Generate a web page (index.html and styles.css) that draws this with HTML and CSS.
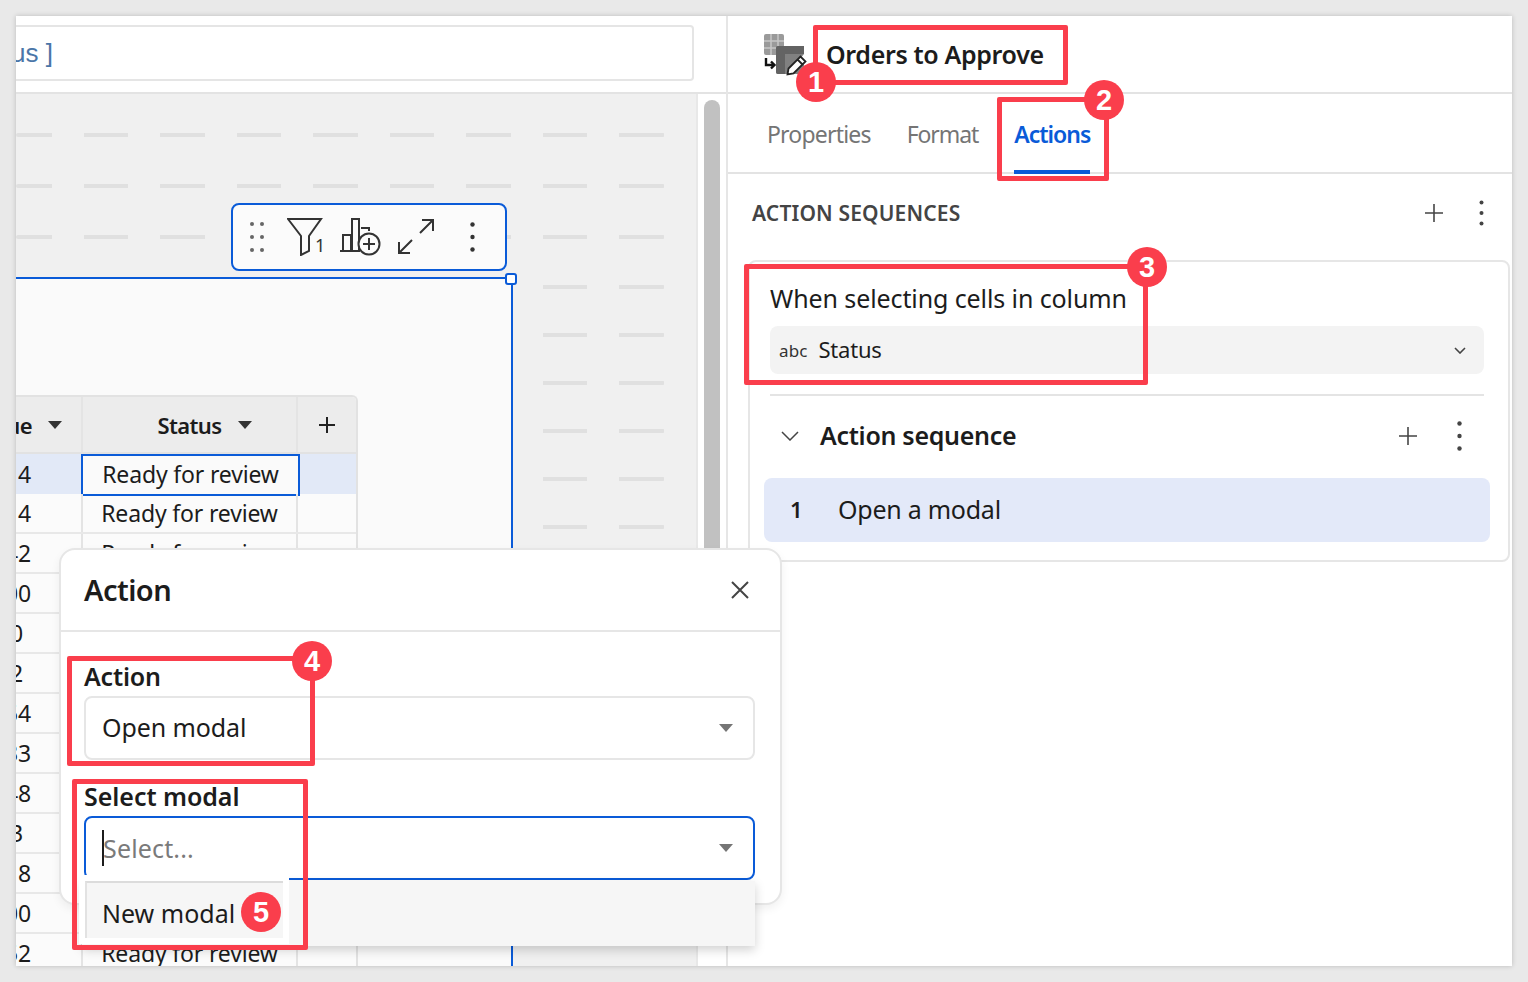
FILE: index.html
```html
<!DOCTYPE html>
<html lang="en">
<head>
    <meta charset="UTF-8">
    <meta name="viewport" content="width=device-width, initial-scale=1.0">
    <title>Orders to Approve - Actions</title>
    <link rel="stylesheet" href="styles.css">
</head>
<body>
    <div class="app">
        <!-- Left side: formula bar and workbook canvas -->
        <div class="workbook">
            <div class="formula-bar">
                <div class="formula-input"><span class="formula-text">us ]</span></div>
            </div>
            <div class="canvas-wrap">
                <div class="canvas">
                    <div class="dashes">
                        <div class="dash-row"></div><div class="dash-row"></div><div class="dash-row"></div>
                        <div class="dash-row"></div><div class="dash-row"></div><div class="dash-row"></div>
                        <div class="dash-row"></div><div class="dash-row"></div><div class="dash-row"></div>
                        <div class="dash-row"></div><div class="dash-row"></div><div class="dash-row"></div>
                        <div class="dash-row"></div><div class="dash-row"></div>
                    </div>

                    <div class="widget">
                        <div class="corner-handle"></div>
                        <div class="data-table">
                            <div class="table-row table-head">
                                <div class="cell cell-num">ue<svg class="sort-caret" viewBox="0 0 14 8"><path d="M0 0h14L7 8z"/></svg></div>
                                <div class="cell cell-status">Status<svg class="sort-caret" viewBox="0 0 14 8"><path d="M0 0h14L7 8z"/></svg></div>
                                <div class="cell cell-add"><svg class="icon-plus" viewBox="0 0 16 16"><path d="M8 0v16M0 8h16"/></svg></div>
                            </div>
                            <div class="table-row row-selected">
                                <div class="cell cell-num">14</div>
                                <div class="cell cell-status cell-active">Ready for review</div>
                                <div class="cell cell-add"></div>
                            </div>
                            <div class="table-row"><div class="cell cell-num">14</div><div class="cell cell-status">Ready for review</div><div class="cell cell-add"></div></div>
                            <div class="table-row"><div class="cell cell-num">42</div><div class="cell cell-status">Ready for review</div><div class="cell cell-add"></div></div>
                            <div class="table-row"><div class="cell cell-num">300</div><div class="cell cell-status">Ready for review</div><div class="cell cell-add"></div></div>
                            <div class="table-row"><div class="cell cell-num cell-short">10</div><div class="cell cell-status">Ready for review</div><div class="cell cell-add"></div></div>
                            <div class="table-row"><div class="cell cell-num cell-short">12</div><div class="cell cell-status">Ready for review</div><div class="cell cell-add"></div></div>
                            <div class="table-row"><div class="cell cell-num">54</div><div class="cell cell-status">Ready for review</div><div class="cell cell-add"></div></div>
                            <div class="table-row"><div class="cell cell-num">33</div><div class="cell cell-status">Ready for review</div><div class="cell cell-add"></div></div>
                            <div class="table-row"><div class="cell cell-num">48</div><div class="cell cell-status">Ready for review</div><div class="cell cell-add"></div></div>
                            <div class="table-row"><div class="cell cell-num cell-short">13</div><div class="cell cell-status">Ready for review</div><div class="cell cell-add"></div></div>
                            <div class="table-row"><div class="cell cell-num">18</div><div class="cell cell-status">Ready for review</div><div class="cell cell-add"></div></div>
                            <div class="table-row"><div class="cell cell-num">300</div><div class="cell cell-status">Ready for review</div><div class="cell cell-add"></div></div>
                            <div class="table-row"><div class="cell cell-num">52</div><div class="cell cell-status">Ready for review</div><div class="cell cell-add"></div></div>
                        </div>
                    </div>

                    <div class="float-toolbar">
                        <svg class="tb-drag" viewBox="0 0 14 30"><g fill="#666"><circle cx="2" cy="2" r="2"/><circle cx="12" cy="2" r="2"/><circle cx="2" cy="15" r="2"/><circle cx="12" cy="15" r="2"/><circle cx="2" cy="28" r="2"/><circle cx="12" cy="28" r="2"/></g></svg>
                        <div class="tb-filter">
                            <svg viewBox="0 0 36 38"><path d="M1 1h33L22 18v15l-8 4V18z" fill="none" stroke="#333" stroke-width="2"/></svg>
                            <span class="tb-count">1</span>
                        </div>
                        <svg class="tb-chart" viewBox="0 0 42 38"><g fill="none" stroke="#333" stroke-width="2"><path d="M0 33h20M3 33V17h8v16M12 33V1h7v32M22 11V10h7v3"/><circle cx="29" cy="26" r="10.5" fill="#fbfbfb"/><path d="M29 20v12M23 26h12"/></g></svg>
                        <svg class="tb-expand" viewBox="0 0 38 36"><g fill="none" stroke="#333" stroke-width="2"><path d="M23 14L36 1M25 1h11v11M15 21L2 34M2 23v11h11"/></g></svg>
                        <svg class="tb-kebab" viewBox="0 0 5 30"><g fill="#333"><circle cx="2.5" cy="2.5" r="2.2"/><circle cx="2.5" cy="15" r="2.2"/><circle cx="2.5" cy="27.5" r="2.2"/></g></svg>
                    </div>
                </div>
                <div class="scroll-gutter"><div class="scroll-thumb"></div></div>
            </div>
        </div>

        <!-- Right side: properties panel -->
        <div class="panel">
            <div class="panel-head">
                <svg class="element-icon" viewBox="0 0 42 42">
                    <rect x="0" y="0" width="20" height="21" rx="2" fill="#9a9a9a"/>
                    <path d="M0 7h20M0 14h20M7 0v21M14 0v21" stroke="#c6c6c6" stroke-width="1.5"/>
                    <rect x="12" y="12" width="28" height="28" rx="2" fill="#808080"/>
                    <path d="M12 20h28v-8H14a2 2 0 0 0-2 2zM12 20h9v20h-7a2 2 0 0 1-2-2z" fill="#636363"/>
                    <path d="M22 42L40 20l4 4-18 18z" fill="#fff"/>
                    <path d="M2 24v7h8M7 27.500l3.500 3.500L7 34.500" fill="none" stroke="#111" stroke-width="2.400"/>
                    <path d="M23.500 40.500l1-6 12-12 5 5-12 12zM33.500 25.500l5 5" fill="#fff" stroke="#222" stroke-width="1.800"/>
                </svg>
                <h1 class="panel-title">Orders to Approve</h1>
            </div>
            <div class="tabs">
                <div class="tab">Properties</div>
                <div class="tab tab-format">Format</div>
                <div class="tab tab-active">Actions</div>
            </div>
            <div class="section-head">
                <span class="section-title">ACTION SEQUENCES</span>
                <svg class="icon-plus icon-thin" viewBox="0 0 16 16"><path d="M8 0v16M0 8h16"/></svg>
                <svg class="icon-kebab" viewBox="0 0 5 26"><g fill="#444"><circle cx="2.5" cy="2.5" r="2"/><circle cx="2.5" cy="13" r="2"/><circle cx="2.5" cy="23.500" r="2"/></g></svg>
            </div>
            <div class="seq-card">
                <div class="seq-label">When selecting cells in column</div>
                <div class="column-select">
                    <span class="type-tag">abc</span>
                    <span class="column-name">Status</span>
                    <svg class="chevron" viewBox="0 0 12 7"><path d="M1 1l5 5 5-5"/></svg>
                </div>
                <div class="seq-rule"></div>
                <div class="seq-head">
                    <svg class="chevron chevron-lg" viewBox="0 0 18 10"><path d="M1 1l8 8 8-8"/></svg>
                    <span class="seq-name">Action sequence</span>
                    <svg class="icon-plus icon-thin" viewBox="0 0 16 16"><path d="M8 0v16M0 8h16"/></svg>
                    <svg class="icon-kebab" viewBox="0 0 5 30"><g fill="#444"><circle cx="2.5" cy="2.500" r="2.200"/><circle cx="2.5" cy="15" r="2.200"/><circle cx="2.5" cy="27.500" r="2.200"/></g></svg>
                </div>
                <div class="seq-item">
                    <span class="seq-num">1</span>
                    <span class="seq-text">Open a modal</span>
                </div>
            </div>
        </div>

        <!-- Action modal -->
        <div class="modal">
            <div class="modal-head">
                <h2 class="modal-title">Action</h2>
                <svg class="modal-close" viewBox="0 0 18 18"><path d="M1 1l16 16M17 1L1 17"/></svg>
            </div>
            <div class="modal-body">
                <div class="field-label">Action</div>
                <div class="select">
                    <span class="select-value">Open modal</span>
                    <svg class="select-caret" viewBox="0 0 14 8"><path d="M0 0h14L7 8z"/></svg>
                </div>
                <div class="field-label field-label-2">Select modal</div>
                <div class="select select-focus">
                    <span class="caret-bar"></span>
                    <span class="select-placeholder">Select...</span>
                    <svg class="select-caret" viewBox="0 0 14 8"><path d="M0 0h14L7 8z"/></svg>
                </div>
            </div>
        </div>
        <div class="dropdown">
            <div class="option"><span class="option-text">New modal</span></div>
        </div>

        <!-- Red callouts -->
        <div class="callout callout-1"></div>
        <div class="callout callout-2"></div>
        <div class="callout callout-3"></div>
        <div class="callout callout-4"></div>
        <div class="callout callout-5"></div>
        <div class="badge badge-1">1</div>
        <div class="badge badge-2">2</div>
        <div class="badge badge-3">3</div>
        <div class="badge badge-4">4</div>
        <div class="badge badge-5">5</div>
    </div>
</body>
</html>
```

FILE: styles.css
```css
/* Page frame */
* {
    box-sizing: border-box;
}

html, body {
    height: 100%;
}

body {
    margin: 0;
    padding: 16px;
    background-color: #e9e9e9;
    font-family: "Noto Sans", Arial, sans-serif;
    color: #1c1c1c;
    overflow: hidden;
}

.app {
    position: relative;
    display: flex;
    width: 1496px;
    height: 950px;
    background-color: #ffffff;
    overflow: hidden;
    box-shadow: 0 0 5px rgba(0, 0, 0, 0.2);
}

/* Left side */
.workbook {
    display: flex;
    flex-direction: column;
    width: 712px;
    flex-shrink: 0;
    border-right: 2px solid #e6e6e6;
}

.formula-bar {
    height: 78px;
    padding-top: 9px;
    border-bottom: 2px solid #e3e3e3;
    flex-shrink: 0;
}

.formula-input {
    display: flex;
    align-items: center;
    width: 678px;
    height: 56px;
    border: 2px solid #e5e5e5;
    border-left: 0;
    border-radius: 0 4px 4px 0;
    overflow: hidden;
}

.formula-text {
    margin-left: -5px;
    font-family: "Liberation Sans", Arial, sans-serif;
    font-size: 26px;
    color: #4a76a8;
}

.canvas-wrap {
    display: flex;
    flex: 1;
    min-height: 0;
}

.canvas {
    position: relative;
    width: 682px;
    flex-shrink: 0;
    background-color: #f0f0f0;
    border-right: 2px solid #e8e8e8;
    overflow: hidden;
}

.dashes {
    display: flex;
    flex-direction: column;
    width: 649px;
    padding-top: 39px;
}

.dash-row {
    height: 4px;
    margin-bottom: 44px;
    flex-shrink: 0;
    border-radius: 2px;
    background-image: repeating-linear-gradient(90deg,
        #e0e0e0 0, #e0e0e0 36px,
        transparent 36px, transparent 68px,
        #e0e0e0 68px, #e0e0e0 76.5px);
}

.dash-row:nth-child(-n+3) {
    margin-bottom: 47px;
}

.dash-row:nth-child(3) {
    margin-bottom: 46px;
}

.scroll-gutter {
    flex: 1;
    padding: 6px 0 0 6px;
}

.scroll-thumb {
    width: 16px;
    height: 800px;
    background-color: #c1c1c1;
    border-radius: 8px 8px 0 0;
}

/* Selected element on the canvas */
.widget {
    position: absolute;
    left: 0;
    top: 183px;
    width: 497px;
    height: 720px;
    background-color: #fafafa;
    border-top: 2px solid #0a5bd8;
    border-right: 2px solid #0a5bd8;
    padding-top: 116px;
}

.corner-handle {
    position: absolute;
    right: -6px;
    top: -6px;
    width: 12px;
    height: 12px;
    background-color: #ffffff;
    border: 2px solid #0a5bd8;
    border-radius: 3px;
}

.data-table {
    width: 342px;
    border-top: 2px solid #e2e2e2;
    border-right: 2px solid #e2e2e2;
    border-top-right-radius: 6px;
    overflow: hidden;
}

.table-row {
    display: flex;
    height: 40px;
    background-color: #fbfbfb;
    border-bottom: 2px solid #e8e8e8;
}

.table-head {
    height: 57px;
    background-color: #ececec;
    font-weight: 600;
    border-bottom: 2px solid #e2e2e2;
}

.row-selected {
    background-color: #e2e9f7;
    border-bottom: 0;
}

.cell {
    display: flex;
    align-items: center;
    font-size: 23px;
    letter-spacing: -0.16px;
    white-space: nowrap;
}

.cell-num {
    justify-content: flex-end;
    width: 67px;
    padding-right: 50px;
    border-right: 2px solid #e4e4e4;
    flex-shrink: 0;
}

.cell-short {
    padding-right: 58px;
}

.table-head .cell-num {
    padding-right: 19px;
    font-size: 22px;
    letter-spacing: -0.6px;
}

.cell-status {
    justify-content: center;
    width: 215px;
    border-right: 2px solid #e4e4e4;
    flex-shrink: 0;
}

.table-head .cell-status {
    padding-left: 30px;
    font-size: 22px;
    letter-spacing: -0.6px;
}

.cell-active {
    width: 219px;
    height: 42px;
    margin-left: -2px;
    margin-right: -2px;
    padding-bottom: 3px;
    background-color: #fafafa;
    border: 2px solid #0a5bd8;
}

.cell-add {
    flex: 1;
    justify-content: center;
}

.sort-caret {
    width: 14px;
    height: 8px;
    margin-left: 16px;
    fill: #333333;
    flex-shrink: 0;
}

.icon-plus {
    width: 16px;
    height: 16px;
    fill: none;
    stroke: #222222;
    stroke-width: 2;
}

.icon-thin {
    width: 18px;
    height: 18px;
    stroke: #444444;
    stroke-width: 1.4;
    flex-shrink: 0;
}

/* Floating toolbar */
.float-toolbar {
    position: absolute;
    left: 215px;
    top: 109px;
    display: flex;
    align-items: center;
    width: 276px;
    height: 68px;
    background-color: #fbfbfb;
    border: 2px solid #0a5bd8;
    border-radius: 8px;
}

.tb-drag {
    width: 14px;
    height: 30px;
    margin-left: 17px;
}

.tb-filter {
    position: relative;
    width: 36px;
    height: 38px;
    margin-left: 23px;
}

.tb-filter svg {
    display: block;
    width: 36px;
    height: 38px;
}

.tb-count {
    position: absolute;
    left: 28px;
    top: 15px;
    font-size: 18px;
    line-height: 24px;
    color: #333333;
}

.tb-chart {
    width: 42px;
    height: 38px;
    margin-left: 17px;
}

.tb-expand {
    width: 38px;
    height: 36px;
    margin-left: 15px;
}

.tb-kebab {
    width: 5px;
    height: 30px;
    margin-left: 35px;
}

/* Right panel */
.panel {
    flex: 1;
    display: flex;
    flex-direction: column;
    min-width: 0;
}

.panel-head {
    display: flex;
    align-items: center;
    height: 78px;
    padding: 0 0 0 36px;
    border-bottom: 2px solid #e3e3e3;
    flex-shrink: 0;
}

.element-icon {
    width: 42px;
    height: 42px;
    margin-top: 2px;
    overflow: visible;
}

.panel-title {
    margin: 0 0 0 20px;
    font-size: 25px;
    font-weight: 600;
    letter-spacing: -0.35px;
    color: #1c1c1c;
}

.tabs {
    display: flex;
    height: 80px;
    padding-left: 39px;
    gap: 36px;
    border-bottom: 2px solid #e3e3e3;
    flex-shrink: 0;
}

.tab {
    display: flex;
    align-items: center;
    height: 80px;
    padding-top: 4px;
    font-size: 23px;
    letter-spacing: -0.8px;
    color: #757575;
    border-bottom: 4px solid transparent;
    border-radius: 4px 4px 0 0;
}

.tab-format {
    letter-spacing: -1.1px;
}

.tab-active {
    font-weight: 600;
    letter-spacing: -1px;
    color: #0a5bd8;
    border-bottom-color: #0a5bd8;
}

.section-head {
    display: flex;
    align-items: center;
    height: 78px;
    padding: 0 28px 0 24px;
    flex-shrink: 0;
}

.section-title {
    flex: 1;
    font-size: 21px;
    font-weight: 600;
    letter-spacing: 0.15px;
    color: #444444;
}

.icon-kebab {
    width: 5px;
    height: 26px;
    margin-left: 36px;
    flex-shrink: 0;
}

.seq-card {
    margin: 8px 2px 0 20px;
    height: 302px;
    padding: 0 24px 0 20px;
    border: 2px solid #e6e6e6;
    border-radius: 8px;
    flex-shrink: 0;
}

.seq-label {
    margin-top: 18px;
    height: 46px;
    font-size: 25px;
    line-height: 36px;
    letter-spacing: -0.1px;
}

.column-select {
    display: flex;
    align-items: center;
    height: 48px;
    padding: 0 18px 0 9px;
    background-color: #f3f3f3;
    border-radius: 8px;
}

.type-tag {
    font-size: 17px;
    letter-spacing: 0.1px;
    color: #333333;
}

.column-name {
    flex: 1;
    margin-left: 11px;
    padding-bottom: 2px;
    font-size: 22px;
    letter-spacing: -0.2px;
}

.chevron {
    width: 12px;
    height: 7px;
    fill: none;
    stroke: #444444;
    stroke-width: 1.6;
    flex-shrink: 0;
}

.seq-rule {
    height: 2px;
    margin-top: 20px;
    background-color: #e4e4e4;
}

.seq-head {
    display: flex;
    align-items: center;
    height: 82px;
    padding: 0 22px 2px 11px;
}

.chevron-lg {
    width: 18px;
    height: 10px;
    stroke-width: 1.5;
}

.seq-name {
    flex: 1;
    margin-left: 21px;
    padding-bottom: 2px;
    font-size: 25px;
    font-weight: 600;
    letter-spacing: -0.3px;
}

.seq-head .icon-kebab {
    height: 30px;
    margin-left: 40px;
}

.seq-item {
    display: flex;
    align-items: center;
    height: 64px;
    margin: 0 -6px;
    padding: 0 0 2px 26px;
    background-color: #e3e9f9;
    border-radius: 8px;
}

.seq-num {
    width: 48px;
    font-size: 22px;
    font-weight: 600;
}

.seq-text {
    font-size: 25px;
    letter-spacing: -0.25px;
}

/* Action modal */
.modal {
    position: absolute;
    left: 43px;
    top: 532px;
    width: 723px;
    height: 357px;
    background-color: #ffffff;
    border: 2px solid #e6e6e6;
    border-radius: 16px;
    box-shadow: 0 4px 10px rgba(0, 0, 0, 0.06);
}

.modal-head {
    display: flex;
    align-items: center;
    justify-content: space-between;
    height: 82px;
    padding: 0 31px 0 23px;
    border-bottom: 2px solid #e6e6e6;
}

.modal-title {
    margin: 0;
    padding-bottom: 2px;
    font-size: 29px;
    font-weight: 600;
    letter-spacing: -0.55px;
}

.modal-close {
    width: 18px;
    height: 18px;
    fill: none;
    stroke: #444444;
    stroke-width: 2;
}

.modal-body {
    padding: 28px 25px 0 23px;
}

.field-label {
    height: 36px;
    font-size: 25px;
    line-height: 32px;
    font-weight: 600;
    letter-spacing: -0.2px;
}

.field-label-2 {
    margin-top: 20px;
    letter-spacing: -0.05px;
}

.select {
    display: flex;
    align-items: center;
    position: relative;
    height: 64px;
    padding: 0 20px 0 16px;
    border: 2px solid #e6e6e6;
    border-radius: 8px;
}

.select-focus {
    border-color: #0a5bd8;
}

.select-value, .select-placeholder {
    flex: 1;
    font-size: 25px;
    letter-spacing: -0.1px;
}

.select-value {
    padding-bottom: 2px;
}

.select-placeholder {
    margin-left: -1px;
    letter-spacing: 0.15px;
    color: #7a7a7a;
}

.caret-bar {
    width: 2px;
    height: 36px;
    background-color: #1c1c1c;
    flex-shrink: 0;
}

.select-caret {
    width: 14px;
    height: 8px;
    fill: #757575;
    flex-shrink: 0;
}

.dropdown {
    position: absolute;
    left: 66px;
    top: 865px;
    width: 673px;
    height: 65px;
    background-color: #f6f6f6;
    box-shadow: 0 4px 10px rgba(0, 0, 0, 0.18);
}

.option {
    display: flex;
    align-items: center;
    width: 198px;
    height: 57px;
    margin-left: 3px;
    padding: 5px 0 0 15px;
    background-color: #f6f6f6;
    border-top: 2px solid #dcdcdc;
    border-left: 2px solid #e2e2e2;
    box-shadow: 0 0 0 6px #ffffff;
}

.option-text {
    font-size: 25px;
    letter-spacing: 0;
}

/* Red callouts drawn on top of the shot */
.callout {
    position: absolute;
    border: 5px solid #fa3e4c;
    border-radius: 2px;
}

.callout-1 { left: 797px; top: 9px; width: 255px; height: 60px; }
.callout-2 { left: 981px; top: 81px; width: 112px; height: 84px; }
.callout-3 { left: 728px; top: 248px; width: 404px; height: 121px; }
.callout-4 { left: 51px; top: 640px; width: 248px; height: 110px; }
.callout-5 { left: 56px; top: 763px; width: 236px; height: 171px; }

.badge {
    position: absolute;
    display: flex;
    align-items: center;
    justify-content: center;
    width: 40px;
    height: 40px;
    background-color: #fa3e4c;
    border-radius: 50%;
    color: #ffffff;
    font-family: "Liberation Sans", Arial, sans-serif;
    font-size: 29px;
    font-weight: 700;
}

.badge-1 { left: 780px; top: 46px; }
.badge-2 { left: 1068px; top: 64px; }
.badge-3 { left: 1111px; top: 231px; }
.badge-4 { left: 276px; top: 625px; }
.badge-5 { left: 225px; top: 876px; }
```
